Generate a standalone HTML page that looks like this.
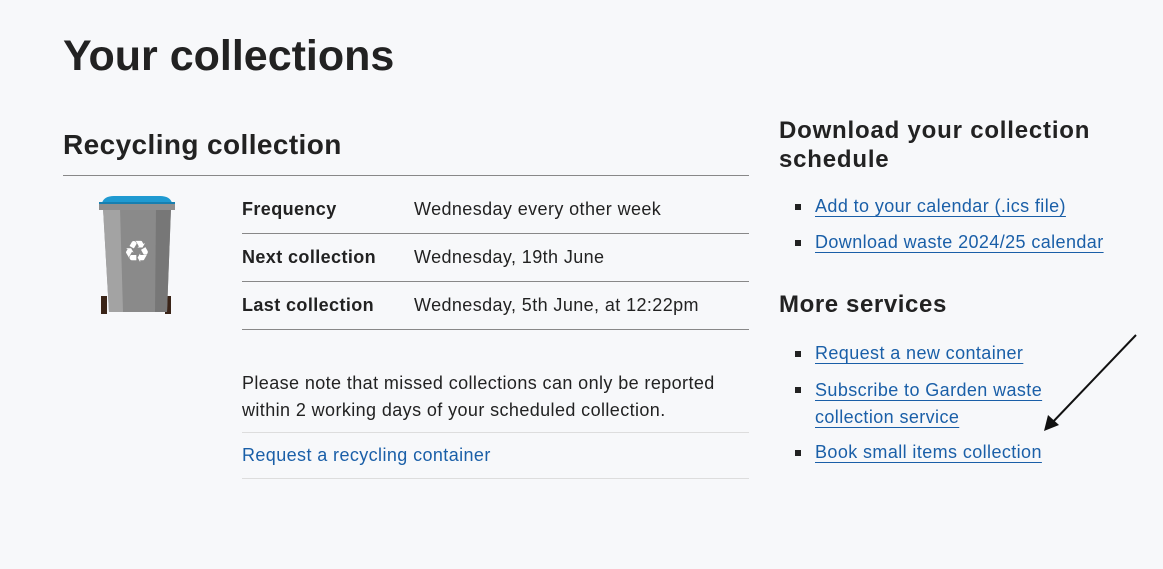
<!DOCTYPE html>
<html><head><style>
body{margin:0;background:#f7f8fa;font-family:"Liberation Sans",sans-serif;color:#222;width:1163px;height:569px;overflow:hidden;position:relative}
.a{position:absolute;white-space:nowrap}
h1,h2,h3{margin:0;font-weight:bold;position:absolute;white-space:nowrap}
.t{font-size:18px;letter-spacing:0.4px}
.b{font-weight:bold}
.l{color:#1a5fa8;text-decoration:underline;text-underline-offset:4px;font-size:18px;letter-spacing:0.4px}
.ln{position:absolute;height:1px;background:#888}
.sq{position:absolute;width:6px;height:6px;background:#222}
</style></head><body>
<h1 style="left:63px;top:32px;font-size:43px;letter-spacing:0px">Your collections</h1>
<h2 style="left:63px;top:129px;font-size:28px;letter-spacing:0.4px">Recycling collection</h2>
<div class="ln" style="left:63px;top:175px;width:686px"></div>
<svg class="a" style="left:98px;top:194px" width="80" height="122" viewBox="0 0 80 122">
<rect x="3" y="102" width="6" height="18" fill="#3a2418"/><rect x="67" y="102" width="6" height="18" fill="#3a2418"/>
<path d="M5 14 L73 14 L69 118 L11 118 Z" fill="#8a8a8a"/>
<path d="M5 14 L22 14 L25 118 L11 118 Z" fill="#a3a3a3"/>
<path d="M58 14 L73 14 L69 118 L57 118 Z" fill="#777"/>
<rect x="1" y="9" width="76" height="7" fill="#8e8e8e"/>
<path d="M4 9 Q6 2 16 2 L62 2 Q72 2 74 9 Z" fill="#1f9ad1"/>
<rect x="1" y="8" width="76" height="2" fill="#177fb0"/>
<text x="39" y="68" font-size="30" font-weight="bold" fill="#fff" text-anchor="middle" font-family="DejaVu Sans">♻</text>
</svg>
<div class="a t b" style="left:242px;top:199px">Frequency</div>
<div class="a t" style="left:414px;top:199px">Wednesday every other week</div>
<div class="ln" style="left:242px;top:233px;width:507px"></div>
<div class="a t b" style="left:242px;top:247px">Next collection</div>
<div class="a t" style="left:414px;top:247px">Wednesday, 19th June</div>
<div class="ln" style="left:242px;top:281px;width:507px"></div>
<div class="a t b" style="left:242px;top:295px">Last collection</div>
<div class="a t" style="left:414px;top:295px">Wednesday, 5th June, at 12:22pm</div>
<div class="ln" style="left:242px;top:329px;width:507px"></div>
<div class="a t" style="left:242px;top:370px;line-height:27px">Please note that missed collections can only be reported<br>within 2 working days of your scheduled collection.</div>
<div class="ln" style="left:242px;top:432px;width:507px;background:#ddd"></div>
<div class="a t" style="left:242px;top:445px;color:#1a5fa8">Request a recycling container</div>
<div class="ln" style="left:242px;top:478px;width:507px;background:#ddd"></div>

<h3 style="left:779px;top:116px;font-size:24px;line-height:29px;letter-spacing:0.8px">Download your collection<br>schedule</h3>
<div class="sq" style="left:795px;top:204px"></div><div class="a l" style="left:815px;top:196px">Add to your calendar (.ics file)</div>
<div class="sq" style="left:795px;top:240px"></div><div class="a l" style="left:815px;top:232px">Download waste 2024/25 calendar</div>
<h3 style="left:779px;top:291px;font-size:24px;letter-spacing:0.6px">More services</h3>
<div class="sq" style="left:795px;top:351px"></div><div class="a l" style="left:815px;top:343px">Request a new container</div>
<div class="sq" style="left:795px;top:387px"></div><div class="a l" style="left:815px;top:377px;line-height:27px">Subscribe to Garden waste<br>collection service</div>
<div class="sq" style="left:795px;top:450px"></div><div class="a l" style="left:815px;top:442px">Book small items collection</div>
<svg class="a" style="left:0;top:0" width="1163" height="569"><line x1="1136" y1="335" x2="1050" y2="425" stroke="#111" stroke-width="2"/><path d="M1044 431 L1048 415 L1059 425 Z" fill="#111"/></svg>
</body></html>
